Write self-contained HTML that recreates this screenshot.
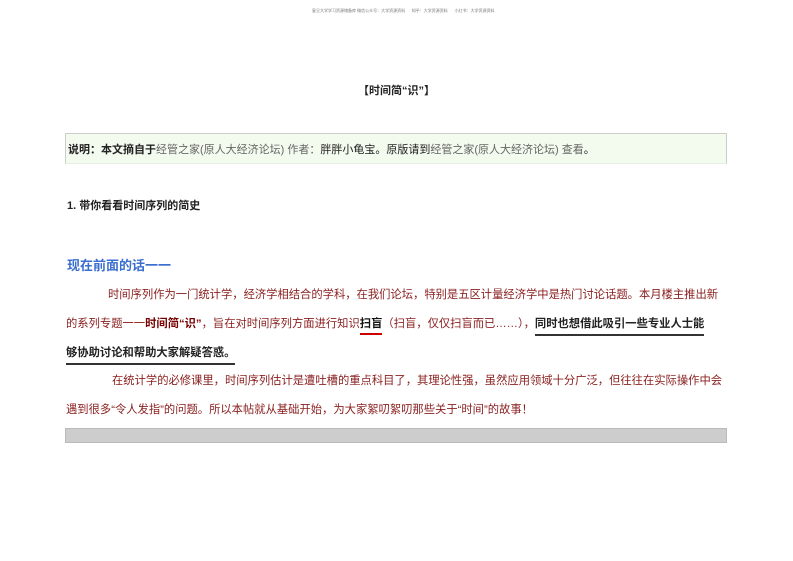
<!DOCTYPE html>
<html><head><meta charset="utf-8"><style>
body{margin:0;width:793px;height:561px;background:#fff;font-family:"Liberation Sans","Noto Sans CJK SC",sans-serif;position:relative;overflow:hidden}
.a{position:absolute;white-space:nowrap}
.p{font-size:11.3px;color:#8b2020;line-height:29px}
b{font-weight:bold}
</style></head><body>
<div class="a" style="top:8px;left:312px;font-size:4px;color:#777">复旦大学学习资源储备库 微信公众号：大学资源资料 &nbsp;&nbsp;&nbsp;&nbsp; 知乎：大学资源资料 &nbsp;&nbsp;&nbsp;&nbsp; 小红书：大学资源资料</div>
<div class="a" style="top:82px;left:358px;font-size:11px;font-weight:bold;color:#222">【时间简“识”】</div>
<div class="a" style="top:133px;left:65px;width:660px;height:29px;background:#f3faee;border:1px solid #ccc;border-bottom-color:#e8efe3"></div>
<div class="a" style="top:141px;left:68px;font-size:11px;color:#222"><b>说明：本文摘自于</b><span style="color:#666">经管之家(原人大经济论坛) 作者：</span>胖胖小龟宝。原版请到<span style="color:#666">经管之家(原人大经济论坛) 查看</span>。</div>
<div class="a" style="top:197px;left:67px;font-size:11px;font-weight:bold;color:#222">1. 带你看看时间序列的简史</div>
<div class="a" style="top:255px;left:67px;font-size:13px;font-weight:bold;color:#3a6fd0">现在前面的话一一</div>
<div class="a p" style="top:281px;left:108px">时间序列作为一门统计学，经济学相结合的学科，在我们论坛，特别是五区计量经济学中是热门讨论话题。本月楼主推出新</div>
<div class="a p" style="top:310px;left:66px">的系列专题一一<b style="color:#700">时间简“识”</b>，旨在对时间序列方面进行知识<b style="color:#111;border-bottom:2px solid #c00;padding-bottom:3px">扫盲</b>（扫盲，仅仅扫盲而已……），<b style="color:#222;border-bottom:2px solid #333;padding-bottom:4px">同时也想借此吸引一些专业人士能</b></div>
<div class="a p" style="top:339px;left:66px"><b style="color:#222;border-bottom:2px solid #333;padding-bottom:4px">够协助讨论和帮助大家解疑答惑。</b></div>
<div class="a p" style="top:367px;left:112px">在统计学的必修课里，时间序列估计是遭吐槽的重点科目了，其理论性强，虽然应用领域十分广泛，但往往在实际操作中会</div>
<div class="a p" style="top:396px;left:66px">遇到很多“令人发指”的问题。所以本帖就从基础开始，为大家絮叨絮叨那些关于“时间”的故事！</div>
<div class="a" style="top:428px;left:65px;width:660px;height:13px;background:#cdcdcd;border:1px solid #bbb"></div>
</body></html>
